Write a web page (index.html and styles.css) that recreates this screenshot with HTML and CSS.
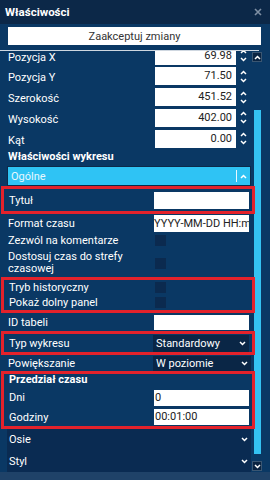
FILE: index.html
```html
<!DOCTYPE html>
<html lang="pl">
<head>
<meta charset="utf-8">
<link rel="stylesheet" href="styles.css">
</head>
<body>
<div class="dialog">
  <div class="titlebar">
    <span class="title">Właściwości</span>
    <svg class="close" width="8" height="8" viewBox="0 0 8 8"><path d="M1 1L7 7M7 1L1 7" stroke="#7f90a4" stroke-width="1.6"/></svg>
  </div>
  <div class="actions"><button class="accept">Zaakceptuj zmiany</button></div>
  <div class="rule"></div>
  <div class="body">
    <div class="viewport">
      <div class="content">
        <div class="prop"><span class="label">Pozycja X</span><span class="num">69.98</span><span class="spin"><svg width="7" height="13" viewBox="0 0 7 13"><path d="M1 4L3.5 1.5L6 4M1 9L3.5 11.5L6 9" stroke="#fff" stroke-width="1.5" fill="none"/></svg></span></div>
        <div class="prop"><span class="label">Pozycja Y</span><span class="num">71.50</span><span class="spin"><svg width="7" height="13" viewBox="0 0 7 13"><path d="M1 4L3.5 1.5L6 4M1 9L3.5 11.5L6 9" stroke="#fff" stroke-width="1.5" fill="none"/></svg></span></div>
        <div class="prop"><span class="label">Szerokość</span><span class="num">451.52</span><span class="spin"><svg width="7" height="13" viewBox="0 0 7 13"><path d="M1 4L3.5 1.5L6 4M1 9L3.5 11.5L6 9" stroke="#fff" stroke-width="1.5" fill="none"/></svg></span></div>
        <div class="prop"><span class="label">Wysokość</span><span class="num">402.00</span><span class="spin"><svg width="7" height="13" viewBox="0 0 7 13"><path d="M1 4L3.5 1.5L6 4M1 9L3.5 11.5L6 9" stroke="#fff" stroke-width="1.5" fill="none"/></svg></span></div>
        <div class="prop"><span class="label">Kąt</span><span class="num">0.00</span><span class="spin"><svg width="7" height="13" viewBox="0 0 7 13"><path d="M1 4L3.5 1.5L6 4M1 9L3.5 11.5L6 9" stroke="#fff" stroke-width="1.5" fill="none"/></svg></span></div>

        <div class="heading">Właściwości wykresu</div>

        <div class="acc acc-open"><span class="acc-title">Ogólne</span><span class="acc-sep"></span><svg class="chev" width="7" height="5" viewBox="0 0 7 5"><path d="M1 4L3.5 1.5L6 4" stroke="#fff" stroke-width="1.5" fill="none"/></svg></div>

        <div class="hl">
          <div class="row h22"><span class="label">Tytuł</span><span class="field f17"></span></div>
        </div>
        <div class="row h18"><span class="label">Format czasu</span><span class="field f17 clip">YYYY-MM-DD HH:mm:ss</span></div>
        <div class="row h17"><span class="label">Zezwól na komentarze</span><span class="check"></span></div>
        <div class="row h28"><span class="label wrap">Dostosuj czas do strefy czasowej</span><span class="check"></span></div>
        <div class="hl">
          <div class="row h15"><span class="label">Tryb historyczny</span><span class="check"></span></div>
          <div class="row h15"><span class="label">Pokaż dolny panel</span><span class="check"></span></div>
        </div>
        <div class="row h18"><span class="label">ID tabeli</span><span class="field f15"></span></div>
        <div class="hl">
          <div class="row h18"><span class="label">Typ wykresu</span><span class="select f17">Standardowy<svg class="chev" width="7" height="5" viewBox="0 0 7 5"><path d="M1 1L3.5 3.5L6 1" stroke="#fff" stroke-width="1.5" fill="none"/></svg></span></div>
        </div>
        <div class="row h16"><span class="label">Powiększanie</span><span class="select f15">W poziomie<svg class="chev" width="7" height="5" viewBox="0 0 7 5"><path d="M1 1L3.5 3.5L6 1" stroke="#fff" stroke-width="1.5" fill="none"/></svg></span></div>
        <div class="hl">
          <div class="subhead">Przedział czasu</div>
          <div class="row h21"><span class="label">Dni</span><span class="field f16 left">0</span></div>
          <div class="row h18"><span class="label">Godziny</span><span class="field f16 left">00:01:00</span></div>
        </div>
        <div class="acc acc-closed h21"><span class="acc-title">Osie</span><svg class="chev" width="7" height="5" viewBox="0 0 7 5"><path d="M1 1L3.5 3.5L6 1" stroke="#fff" stroke-width="1.5" fill="none"/></svg></div>
        <div class="acc acc-closed h22"><span class="acc-title">Styl</span><svg class="chev" width="7" height="5" viewBox="0 0 7 5"><path d="M1 1L3.5 3.5L6 1" stroke="#fff" stroke-width="1.5" fill="none"/></svg></div>
      </div>
    </div>
    <div class="scrollbar">
      <div class="sb-btn"><svg width="7" height="5" viewBox="0 0 7 5"><path d="M1 4L3.5 1.5L6 4" stroke="#fff" stroke-width="1.5" fill="none"/></svg></div>
      <div class="sb-track"><div class="sb-thumb"></div></div>
      <div class="sb-btn"><svg width="7" height="5" viewBox="0 0 7 5"><path d="M1 1L3.5 3.5L6 1" stroke="#fff" stroke-width="1.5" fill="none"/></svg></div>
    </div>
  </div>
  <div class="footer"></div>
</div>
</body>
</html>
```
FILE: styles.css
```css
* { box-sizing: border-box; }
html, body { margin: 0; padding: 0; }
body {
  width: 270px;
  height: 480px;
  overflow: hidden;
  background: #0a3864;
  font-family: Roboto, "Liberation Sans", sans-serif;
  font-size: 11px;
  color: #fff;
}
.dialog { width: 270px; height: 480px; display: flex; flex-direction: column; }
.titlebar {
  height: 24px;
  flex: none;
  background: #0c2848;
  display: flex;
  align-items: center;
  justify-content: space-between;
  padding: 0 8px 0 5px;
}
.title { font-weight: bold; font-size: 11.5px; }
.actions { flex: none; padding: 3px 9px 5px 8px; }
.accept {
  display: block;
  width: 253px;
  height: 18px;
  margin: 0;
  border: 0;
  background: #fff;
  color: #333;
  font-family: Roboto, "Liberation Sans", sans-serif;
  font-size: 11px;
  padding: 0;
}
.rule { flex: none; width: 259px; height: 1px; background: #cfd7e0; }
.body { flex: none; height: 421px; display: flex; }
.viewport {
  width: 252px;
  height: 421px;
  overflow-x: visible;
  overflow-y: clip;
}
.content { margin-top: -5.7px; padding: 0 1px 0 7px; }
.label { flex: none; white-space: nowrap; }
.prop { height: 20.75px; display: flex; align-items: center; }
.prop .label { width: 148px; padding-left: 1px; padding-top: 3px; }
.num {
  width: 81px;
  height: 18px;
  background: #fff;
  color: #222;
  text-align: right;
  padding-right: 4px;
  line-height: 18px;
}
.spin { flex: 1; display: flex; justify-content: center; align-items: center; }
.heading { height: 17px; line-height: 16px; font-weight: bold; padding-left: 1px; }
.acc { display: flex; align-items: center; }
.acc-open {
  height: 20px;
  background: #2fc3f4;
  border: 1px solid #0c2a4a;
  padding: 0 2px 0 3px;
}
.acc-open .acc-title { flex: 1; color: #e9f8ff; }
.acc-sep { width: 1px; height: 12px; background: #e9f8ff; margin-right: 3px; }
.acc-open .chev { margin-right: 1px; }
.acc-closed { background: #0a2b52; padding: 0 3px 0 2px; justify-content: space-between; }
.row { display: flex; align-items: center; padding-left: 1px; }
.row .label { width: 146px; }
.row .label.wrap { white-space: normal; line-height: 12px; width: 120px; margin-right: 26px; }
.h15 { height: 15px; }
.h16 { height: 16px; }
.h17 { height: 17px; }
.h18 { height: 18px; }
.h21 { height: 21px; }
.h22 { height: 22px; }
.h28 { height: 28px; }
.field {
  width: 95px;
  background: #fff;
  color: #222;
  overflow: hidden;
  white-space: nowrap;
}
.f15 { height: 15px; line-height: 15px; }
.f16 { height: 16px; line-height: 16px; }
.f17 { height: 17px; line-height: 17px; }
.field.left { padding-left: 1px; }
.check { width: 11px; height: 11px; background: #0b2a4f; margin-left: 1px; }
.select {
  width: 98px;
  margin-left: -1px;
  background: #0a2646;
  display: flex;
  align-items: center;
  justify-content: space-between;
  padding: 0 3px 0 3px;
  font-size: 11px;
}
.hl {
  position: relative;
  z-index: 1;
  border: 3px solid #e3222b;
  margin: 0 -4px 0 -6px;
  padding: 0 3px 0 4px;
}
.hl .row .label { width: 145px; }
.subhead { height: 13px; line-height: 12px; font-weight: bold; padding-left: 1px; }
.scrollbar { width: 10px; display: flex; flex-direction: column; padding-top: 1px; }
.sb-btn {
  width: 10px;
  height: 10px;
  flex: none;
  background: #0a2442;
  border: 1px solid #3a5672;
  display: flex;
  align-items: center;
  justify-content: center;
}
.sb-track { flex: 1; padding: 48px 1px 7px 2px; }
.sb-thumb { width: 7px; height: 100%; background: #34c2f2; }
.scrollbar .sb-btn:last-child { margin-bottom: 1px; }
.footer { flex: 1; background: #1f4268; }
```
